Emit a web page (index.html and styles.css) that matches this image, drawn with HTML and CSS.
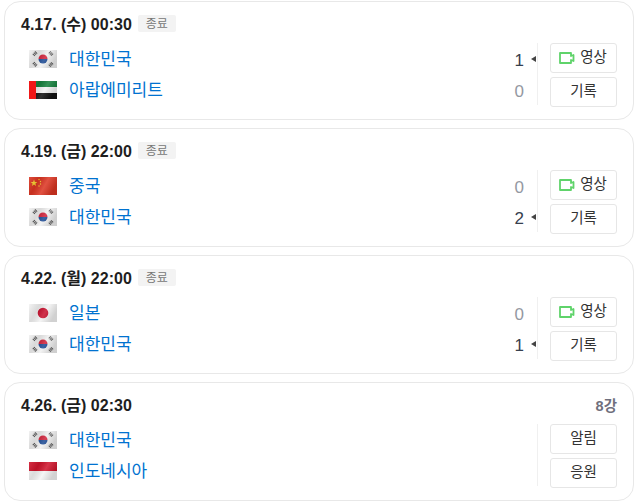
FILE: index.html
```html
<!DOCTYPE html>
<html lang="ko">
<head>
<meta charset="utf-8">
<title>경기 일정</title>
<link rel="stylesheet" href="styles.css">
</head>
<body>
<svg class="defs" width="0" height="0" aria-hidden="true">
  <defs>
    <linearGradient id="gloss" x1="0" y1="0" x2="1" y2="0.35">
      <stop offset="0" stop-color="#fff" stop-opacity=".12"/>
      <stop offset=".35" stop-color="#000" stop-opacity=".1"/>
      <stop offset=".65" stop-color="#fff" stop-opacity=".14"/>
      <stop offset="1" stop-color="#000" stop-opacity=".14"/>
    </linearGradient>
    <symbol id="kr" viewBox="0 0 28 18">
      <rect width="28" height="18" fill="#f1f1f1"/>
      <path d="M9.500 9a4.500 4.500 0 0 1 9 0z" fill="#d0223a"/>
      <path d="M9.500 9a4.500 4.500 0 0 0 9 0z" fill="#1c4a94"/>
      <g fill="none" stroke="#555" stroke-width="3" stroke-dasharray="1 .6">
        <path d="M4.500 5.200l3-3.200M20.500 2l3 3.200M4.500 12.800l3 3.200M20.500 16l3-3.200"/>
      </g>
      <rect width="28" height="18" fill="url(#gloss)"/>
    </symbol>
    <symbol id="ae" viewBox="0 0 28 18">
      <rect width="28" height="6" fill="#14803c"/>
      <rect y="6" width="28" height="6" fill="#f4f4f4"/>
      <rect y="12" width="28" height="6" fill="#111"/>
      <rect width="28" height="18" fill="url(#gloss)"/>
      <rect width="7" height="18" fill="#f01818"/>
    </symbol>
    <symbol id="cn" viewBox="0 0 28 18">
      <rect width="28" height="18" fill="#dc3522"/>
      <path d="M5 2.500l.9 2.400 2.500.1-2 1.500.7 2.400L5 7.500 2.900 8.900l.7-2.400-2-1.500 2.500-.1z" fill="#f8d030"/>
      <g fill="#f8d030"><circle cx="10" cy="2.500" r=".7"/><circle cx="11.500" cy="4.500" r=".7"/><circle cx="11.500" cy="7" r=".7"/><circle cx="10" cy="9" r=".7"/></g>
      <rect width="28" height="18" fill="url(#gloss)"/>
    </symbol>
    <symbol id="jp" viewBox="0 0 28 18">
      <rect width="28" height="18" fill="#f3f3f3"/>
      <circle cx="14" cy="9" r="5.300" fill="#c8102e"/>
      <rect width="28" height="18" fill="url(#gloss)"/>
    </symbol>
    <symbol id="id" viewBox="0 0 28 18">
      <rect width="28" height="9" fill="#d0142c"/>
      <rect y="9" width="28" height="9" fill="#f4f4f4"/>
      <rect width="28" height="18" fill="url(#gloss)"/>
    </symbol>
    <symbol id="cam" viewBox="0 0 16 14">
      <path d="M1 2h11v3l2.500-1v6L12 9v3H1z" fill="none" stroke="#5fd36a" stroke-width="1.800" stroke-linejoin="round"/>
    </symbol>
  </defs>
</svg>

<main class="list">
  <section class="card">
    <header class="head"><span class="time">4.17. (수) 00:30</span><span class="badge">종료</span></header>
    <div class="body">
      <div class="teams">
        <div class="team"><svg class="flag"><use href="#kr"/></svg><a class="name">대한민국</a><span class="score win">1</span><i class="arrow"></i></div>
        <div class="team"><svg class="flag"><use href="#ae"/></svg><a class="name">아랍에미리트</a><span class="score">0</span><i class="arrow off"></i></div>
      </div>
      <div class="actions">
        <a class="btn"><svg class="cam"><use href="#cam"/></svg>영상</a>
        <a class="btn">기록</a>
      </div>
    </div>
  </section>

  <section class="card">
    <header class="head"><span class="time">4.19. (금) 22:00</span><span class="badge">종료</span></header>
    <div class="body">
      <div class="teams">
        <div class="team"><svg class="flag"><use href="#cn"/></svg><a class="name">중국</a><span class="score">0</span><i class="arrow off"></i></div>
        <div class="team"><svg class="flag"><use href="#kr"/></svg><a class="name">대한민국</a><span class="score win">2</span><i class="arrow"></i></div>
      </div>
      <div class="actions">
        <a class="btn"><svg class="cam"><use href="#cam"/></svg>영상</a>
        <a class="btn">기록</a>
      </div>
    </div>
  </section>

  <section class="card">
    <header class="head"><span class="time">4.22. (월) 22:00</span><span class="badge">종료</span></header>
    <div class="body">
      <div class="teams">
        <div class="team"><svg class="flag"><use href="#jp"/></svg><a class="name">일본</a><span class="score">0</span><i class="arrow off"></i></div>
        <div class="team"><svg class="flag"><use href="#kr"/></svg><a class="name">대한민국</a><span class="score win">1</span><i class="arrow"></i></div>
      </div>
      <div class="actions">
        <a class="btn"><svg class="cam"><use href="#cam"/></svg>영상</a>
        <a class="btn">기록</a>
      </div>
    </div>
  </section>

  <section class="card">
    <header class="head"><span class="time">4.26. (금) 02:30</span><span class="round">8강</span></header>
    <div class="body">
      <div class="teams">
        <div class="team"><svg class="flag"><use href="#kr"/></svg><a class="name">대한민국</a></div>
        <div class="team"><svg class="flag"><use href="#id"/></svg><a class="name">인도네시아</a></div>
      </div>
      <div class="actions">
        <a class="btn">알림</a>
        <a class="btn">응원</a>
      </div>
    </div>
  </section>
</main>
</body>
</html>
```

FILE: styles.css
```css
* { box-sizing: border-box; }

html, body { margin: 0; background: #fff; }

body {
  font-family: "Liberation Sans", "Noto Sans CJK KR", sans-serif;
  color: #222;
}

.defs { display: block; height: 0; }

.list {
  display: flex;
  flex-direction: column;
  gap: 8px;
  padding: 1px 5px 0 4px;
}

.card {
  height: 119px;
  border: 1px solid #e8e8e8;
  border-radius: 16px;
  padding: 12px 16px 0 16px;
  background: #fff;
}

.head {
  display: flex;
  align-items: center;
  height: 20px;
}

.time {
  font-size: 16px;
  line-height: 20px;
  margin-top: 1px;
  font-weight: 700;
  color: #1e1e1e;
}

.badge {
  margin-left: 6px;
  margin-top: -1px;
  width: 38px;
  height: 17px;
  line-height: 18px;
  text-align: center;
  font-size: 12px;
  color: #777;
  background: #f3f3f3;
  border-radius: 2px;
}

.round {
  margin-left: auto;
  font-size: 14.500px;
  font-weight: 700;
  margin-top: -1px;
  color: #6f6f7d;
}

.body {
  display: flex;
  margin-top: 9px;
}

.teams {
  flex: 1;
  display: flex;
  flex-direction: column;
  gap: 1px;
  padding-top: 1px;
  border-right: 1px solid #f0f0f0;
  height: 62px;
}

.team {
  display: flex;
  align-items: center;
  height: 30px;
  padding-left: 8px;
}

.flag {
  width: 28px;
  height: 18px;
  flex: none;
}

.name {
  margin-left: 12px;
  font-size: 17px;
  line-height: 24px;
  margin-top: 1px;
  color: #0072d0;
}

.score {
  margin-left: auto;
  font-size: 17px;
  line-height: 24px;
  margin-top: 3px;
  color: #9498a2;
}

.score.win { color: #37404e; }

.arrow {
  margin: 0 1px 0 7px;
  width: 0;
  height: 0;
  border-style: solid;
  border-width: 3px 5px 3px 0;
  border-color: transparent #444 transparent transparent;
}

.arrow.off { border-color: transparent; }

.actions {
  flex: none;
  display: flex;
  flex-direction: column;
  gap: 4px;
  margin-left: 12px;
}

.btn {
  display: flex;
  align-items: center;
  justify-content: center;
  width: 67px;
  height: 30px;
  border: 1px solid #e6e6e6;
  border-radius: 3px;
  font-size: 14.500px;
  line-height: 20px;
  padding-bottom: 2px;
  color: #333;
}

.cam {
  width: 16px;
  height: 14px;
  margin-right: 5px;
  margin-top: 2px;
  margin-left: -1px;
}
```
